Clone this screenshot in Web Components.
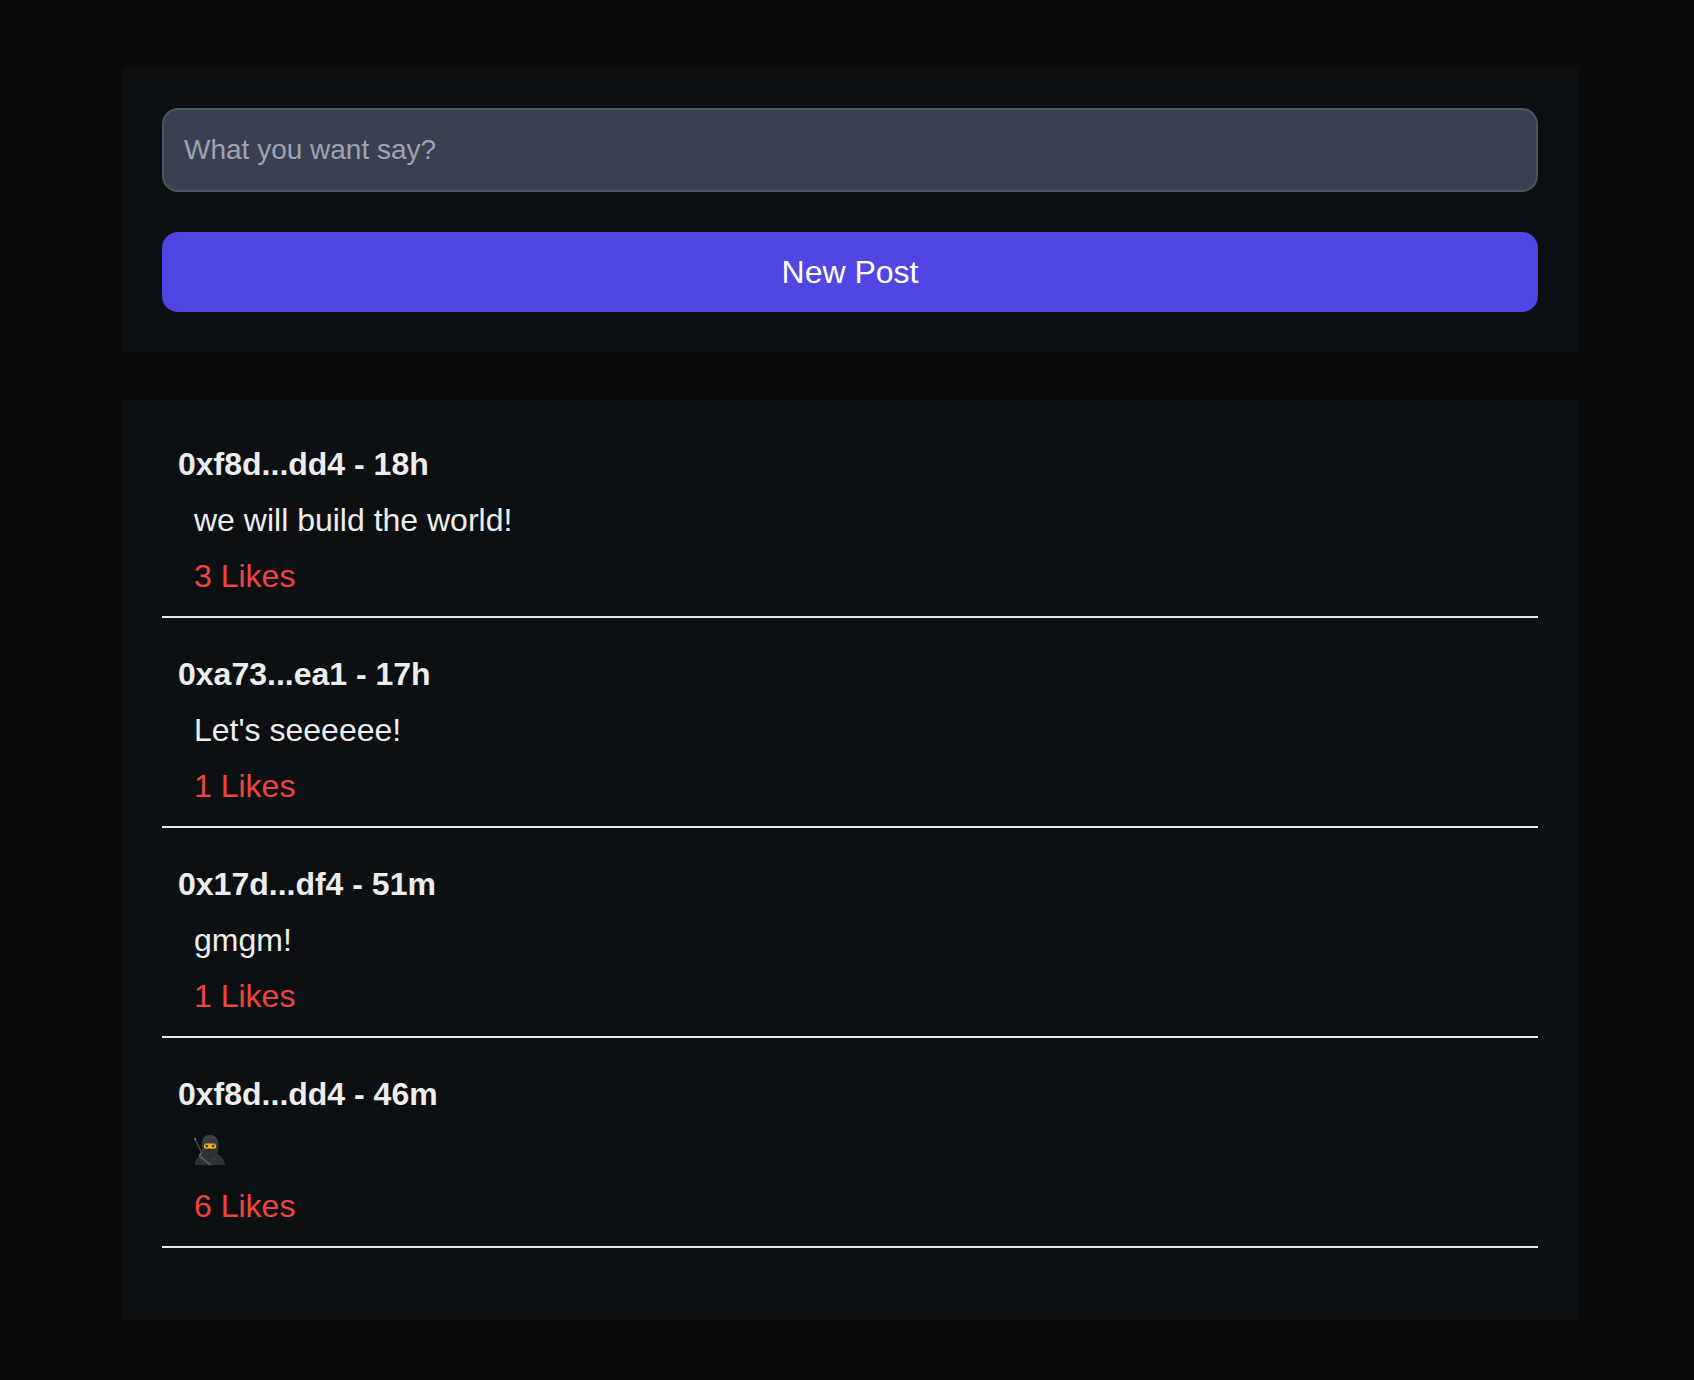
<!DOCTYPE html>
<html lang="en">
<head>
<meta charset="utf-8">
<meta name="viewport" content="width=device-width, initial-scale=1">
<title>Posts</title>
<style>
  body { margin: 0; background: #0a0a0a; color: #ededed; font: 32px/48px "Liberation Sans", Arial, sans-serif; }
</style>
</head>
<body>
<post-app>
  <panel-box><post-form></post-form></panel-box>
  <panel-box>
    <post-item author="0xf8d...dd4" age="18h" likes="3">we will build the world!</post-item>
    <post-item author="0xa73...ea1" age="17h" likes="1">Let's seeeeee!</post-item>
    <post-item author="0x17d...df4" age="51m" likes="1">gmgm!</post-item>
    <post-item author="0xf8d...dd4" age="46m" likes="6"><ninja-emoji></ninja-emoji></post-item>
  </panel-box>
</post-app>
<script>
  const define = (name, html, setup) => {
    const template = document.createElement('template');
    template.innerHTML = html;
    customElements.define(name, class extends HTMLElement {
      connectedCallback() {
        if (this.shadowRoot) return;
        const root = this.attachShadow({ mode: 'open' });
        root.append(template.content.cloneNode(true));
        if (setup) setup(this, root);
      }
    });
  };

  define('post-app', `
    <style>
      :host { display: block; }
      main { display: flex; flex-direction: column; gap: 48px; padding: 68px 116px 60px 122px; }
    </style>
    <main><slot></slot></main>`);

  define('panel-box', `
    <style>
      :host { display: block; padding: 40px; background: #0c1012; }
    </style>
    <slot></slot>`);

  define('post-form', `
    <style>
      :host { display: block; }
      form { display: flex; flex-direction: column; gap: 40px; }
      input, button { box-sizing: border-box; width: 100%; margin: 0; border-radius: 16px; font-family: inherit; }
      input { height: 84px; padding: 20px; border: 2px solid #4b5563; background: #394150; color: #fff; font-size: 28px; }
      input::placeholder { color: #9ca3af; opacity: 1; }
      button { height: 80px; padding: 16px; border: 0; background: #5046e4; color: #fff; font-size: 32px; line-height: 48px; cursor: pointer; }
    </style>
    <form onsubmit="return false">
      <input type="text" aria-label="What you want say?" placeholder="What you want say?">
      <button type="submit">New Post</button>
    </form>`);

  define('post-item', `
    <style>
      :host { display: block; margin-bottom: 32px; }
      article { display: flex; flex-direction: column; gap: 8px; padding: 0 16px 16px; border-bottom: 2px solid #e6ebeb; }
      h2, p { margin: 0; font-size: 32px; line-height: 48px; }
      p { padding-left: 16px; min-height: 48px; }
      .likes { color: #ef4444; }
    </style>
    <article>
      <h2></h2>
      <p><slot></slot></p>
      <p class="likes"></p>
    </article>`,
    (host, root) => {
      root.querySelector('h2').textContent = host.getAttribute('author') + ' - ' + host.getAttribute('age');
      root.querySelector('.likes').textContent = host.getAttribute('likes') + ' Likes';
    });

  define('ninja-emoji', `
    <style>
      :host { display: flex; align-items: center; height: 48px; }
      svg { display: block; width: 32px; height: 32px; }
    </style>
    <svg viewBox="0 0 32 32" role="img" aria-label="Ninja">
      <defs>
        <linearGradient id="hood" x1="0" y1="0" x2="0" y2="1">
          <stop offset="0" stop-color="#404245"/><stop offset="1" stop-color="#2c2e31"/>
        </linearGradient>
      </defs>
      <path d="M1 5 L7.5 18.5" stroke="#45484b" stroke-width="1.6" stroke-linecap="round"/>
      <path d="M.9 4.6 L1.4 5.6" stroke="#85888a" stroke-width="1.4" stroke-linecap="round"/>
      <path d="M.7 31 C1 26 3.5 22.5 10 19 H22 C28 22.5 30.6 25.5 31 31 Z" fill="#2f3134"/>
      <path d="M23.5 21.5 L15 29" stroke="#45484b" stroke-width="1"/>
      <path d="M5.5 22 L16.5 31" stroke="#55585c" stroke-width="1.7"/>
      <path d="M5 21.8 L8.2 18.4" stroke="#7b7e81" stroke-width="1.1"/>
      <path d="M7.8 11 C7.8 4 10.5 1 16 1 S24.3 4 24.3 11 V15.5 C24.3 20 20.5 23 16 23 S7.8 20 7.8 15.5 Z" fill="url(#hood)"/>
      <rect x="10" y="9.6" width="12" height="5.2" rx="1.8" fill="#f5b31a"/>
      <path d="M11 11 L14.3 11.7 M21 11 L17.7 11.7" stroke="#33240b" stroke-width=".9"/>
      <circle cx="12.9" cy="12.5" r=".9" fill="#25190a"/><circle cx="19.1" cy="12.5" r=".9" fill="#25190a"/>
      <path d="M10 16.5 C14 14.8 18 14.8 22 16.5" stroke="#222427" fill="none" stroke-width=".7"/>
    </svg>`);
</script>
</body>
</html>
